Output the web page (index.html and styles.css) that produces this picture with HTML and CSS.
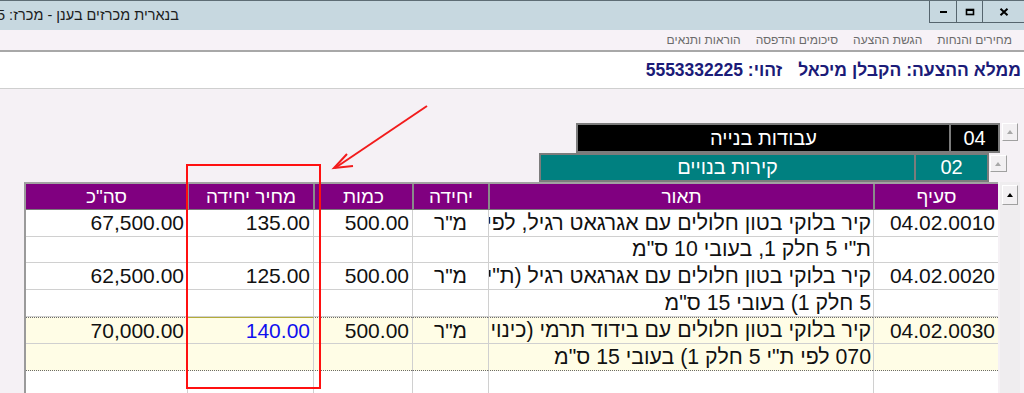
FILE: index.html
```html
<!DOCTYPE html>
<html lang="he">
<head>
  <meta charset="UTF-8" />
  <meta name="viewport" content="width=device-width, initial-scale=1" />
  <title>בנארית מכרזים בענן - מכרז: 5</title>
  <link rel="stylesheet" href="styles.css">
</head>
<body>
  <div class="window">
    <div class="titlebar">
      <span class="title" dir="rtl">בנארית מכרזים בענן - מכרז: 5</span>
      <div class="controls">
        <span class="ctl ctl-min">
          <svg width="9" height="4" viewBox="0 0 9 4"><rect x="1" y="1" width="7" height="2" fill="#000"/></svg>
        </span>
        <span class="ctl ctl-max">
          <svg width="10" height="8" viewBox="0 0 10 8"><rect x="1.5" y="1.5" width="7" height="5" fill="none" stroke="#000" stroke-width="1.6"/><rect x="1" y="1" width="8" height="2" fill="#000"/></svg>
        </span>
        <span class="ctl ctl-close">
          <svg width="10" height="8" viewBox="0 0 10 8"><path d="M1.5 0.8 L8.5 7.2 M8.5 0.8 L1.5 7.2" stroke="#000" stroke-width="2"/></svg>
        </span>
      </div>
    </div>

    <div class="menubar" dir="rtl">
      <a href="#">מחירים והנחות</a>
      <a href="#">הגשת ההצעה</a>
      <a href="#">סיכומים והדפסה</a>
      <a href="#">הוראות ותנאים</a>
    </div>

    <div class="infobar" dir="rtl">
      <span>ממלא ההצעה: הקבלן מיכאל</span>
      <span>זהוי: 5553332225</span>
    </div>

    <div class="workspace">
      <div class="level level-chapter">
        <div class="bar bar-black" dir="rtl">
          <span class="code">04</span>
          <span class="name">עבודות בנייה</span>
        </div>
        <span class="spin"></span>
      </div>

      <div class="level level-sub">
        <div class="bar bar-teal" dir="rtl">
          <span class="code">02</span>
          <span class="name">קירות בנויים</span>
        </div>
        <span class="spin"></span>
      </div>

      <div class="level level-grid">
        <table class="items" dir="rtl">
          <thead>
            <tr>
              <th class="c-seif">סעיף</th>
              <th class="c-desc">תאור</th>
              <th class="c-unit">יחידה</th>
              <th class="c-qty">כמות</th>
              <th class="c-price">מחיר יחידה</th>
              <th class="c-total">סה"כ</th>
            </tr>
          </thead>
          <tbody>
            <tr class="r-tall">
              <td class="num">04.02.0010</td>
              <td class="desc">קיר בלוקי בטון חלולים עם אגרגאט רגיל, לפי</td>
              <td class="unit">מ"ר</td>
              <td class="num">500.00</td>
              <td class="num">135.00</td>
              <td class="num">67,500.00</td>
            </tr>
            <tr class="r-short">
              <td></td>
              <td class="desc">ת"י 5 חלק 1, בעובי 10 ס"מ</td>
              <td></td><td></td><td></td><td></td>
            </tr>
            <tr class="r-tall">
              <td class="num">04.02.0020</td>
              <td class="desc">קיר בלוקי בטון חלולים עם אגרגאט רגיל (ת"י</td>
              <td class="unit">מ"ר</td>
              <td class="num">500.00</td>
              <td class="num">125.00</td>
              <td class="num">62,500.00</td>
            </tr>
            <tr class="r-tall">
              <td></td>
              <td class="desc">5 חלק 1) בעובי 15 ס"מ</td>
              <td></td><td></td><td></td><td></td>
            </tr>
            <tr class="r-short sel sel-first">
              <td class="num">04.02.0030</td>
              <td class="desc">קיר בלוקי בטון חלולים עם בידוד תרמי (כינוי</td>
              <td class="unit">מ"ר</td>
              <td class="num">500.00</td>
              <td class="num edit">140.00</td>
              <td class="num">70,000.00</td>
            </tr>
            <tr class="r-tall sel sel-last">
              <td></td>
              <td class="desc">070 לפי ת"י 5 חלק 1) בעובי 15 ס"מ</td>
              <td></td><td></td><td></td><td></td>
            </tr>
            <tr class="r-tall">
              <td></td><td></td><td></td><td></td><td></td><td></td>
            </tr>
          </tbody>
        </table>
        <div class="vscroll">
          <span class="spin spin-on"></span>
        </div>
      </div>
    </div>

    <div class="mark-box"></div>
    <svg class="mark-arrow" width="110" height="80" viewBox="0 0 110 80">
      <path d="M105 8 L13 70" stroke="#f21c1c" stroke-width="2" fill="none"/>
      <path d="M25 56 L12 70 L31 68" stroke="#f21c1c" stroke-width="2" fill="none"/>
    </svg>
  </div>
</body>
</html>
```

FILE: styles.css
```css
* {
  box-sizing: border-box;
}

body {
  margin: 0;
  font-family: "Liberation Sans", Arial, sans-serif;
  background-color: #f5f1f5;
  overflow: hidden;
}

.window {
  position: relative;
  width: 1024px;
  height: 393px;
  display: flex;
  flex-direction: column;
  overflow: hidden;
}

/* title bar */
.titlebar {
  height: 30px;
  flex: none;
  background-color: #c7d8e0;
  border-top: 1px solid #5e6d75;
  display: flex;
  justify-content: space-between;
  align-items: flex-start;
}

.title {
  margin-left: -3px;
  line-height: 29px;
  font-size: 14.5px;
  color: #1c1c1c;
}

.controls {
  display: flex;
}

.ctl {
  height: 22px;
  display: flex;
  align-items: center;
  justify-content: center;
  border-left: 1px solid #56656e;
  border-bottom: 1px solid #56656e;
}

.ctl-min {
  width: 27px;
}

.ctl-max {
  width: 26px;
}

.ctl-close {
  width: 42px;
}

/* menu */
.menubar {
  height: 22px;
  flex: none;
  display: flex;
  align-items: center;
  gap: 15px;
  padding-right: 12px;
  background-color: #f7f2f7;
  border-bottom: 2px solid #a8a8a8;
}

.menubar a {
  font-size: 12px;
  color: #6b6b6b;
  text-decoration: none;
}

/* who fills the offer */
.infobar {
  height: 37px;
  flex: none;
  display: flex;
  align-items: center;
  gap: 16px;
  padding-right: 3px;
  background-color: #fff;
  border-bottom: 1px solid #cfcfcf;
  font-size: 17.5px;
  font-weight: bold;
  color: #1b1b78;
}

/* work area */
.workspace {
  flex: 1;
  display: flex;
  flex-direction: column;
  padding-top: 34px;
}

.level {
  display: flex;
  justify-content: flex-end;
  align-items: flex-start;
}

.level-chapter {
  gap: 2px;
  padding-right: 6px;
}

.level-sub {
  gap: 1px;
  padding-right: 17px;
}

.level-grid {
  flex: 1;
  align-items: stretch;
  padding-right: 4px;
}

.bar {
  display: flex;
  gap: 2px;
  border: 2px solid #7c7c7c;
  background-color: #7c7c7c;
  color: #fff;
  font-size: 20px;
}

.bar span {
  display: flex;
  align-items: center;
  justify-content: center;
}

.bar-black {
  width: 424px;
  height: 30px;
}

.bar-black span {
  background-color: #000;
}

.bar-black .code {
  width: 47px;
}

.bar-teal {
  width: 450px;
  height: 29px;
}

.bar-teal span {
  background-color: #008080;
}

.bar-teal .code {
  width: 71px;
}

.bar .name {
  flex: 1;
}

.spin {
  position: relative;
  width: 16px;
  height: 18px;
  background-color: #f2f0f2;
  border: 1px solid;
  border-color: #fff #a0a0a0 #a0a0a0 #fff;
}

.level-sub .spin {
  width: 17px;
  height: 17px;
  margin-top: 2px;
}

.spin::after {
  content: "";
  position: absolute;
  left: 4px;
  top: 6px;
  border-left: 3px solid transparent;
  border-right: 3px solid transparent;
  border-bottom: 4px solid #a8a8a8;
}

.spin-on {
  display: block;
  height: 20px;
  margin: 3px 2px 0 2px;
}

.spin-on::after {
  top: 7px;
  border-bottom-color: #000;
}

/* items grid */
.items {
  width: 974px;
  align-self: flex-start;
  table-layout: fixed;
  border-collapse: separate;
  border-spacing: 0;
  border-top: 2px solid #a2a2a2;
  border-left: 2px solid #9a9a9a;
  background-color: #fff;
  font-size: 21px;
  color: #111;
}

.items th,
.items td {
  padding: 0;
  overflow: hidden;
  white-space: nowrap;
}

.items th {
  height: 26px;
  background-color: #800080;
  color: #fff;
  font-size: 19px;
  font-weight: normal;
  border-left: 2px solid #8a8a8a;
  border-bottom: 1px solid #7a7a7a;
}

.items th:last-child,
.items td:last-child {
  border-left: 0;
}

.c-seif { width: 125px; }
.c-desc { width: 385px; }
.c-unit { width: 76px; }
.c-qty { width: 99px; }
.c-price { width: 126px; }
.c-total { width: 161px; }

.items td {
  border-left: 1px solid #d0d0d0;
  border-bottom: 1px solid #d0d0d0;
}

.r-tall { height: 27px; }
.r-short { height: 26px; }

.items .num {
  text-align: right;
  padding-right: 3px;
}

.items .desc {
  text-align: right;
  padding-right: 2px;
  font-size: 21.3px;
}

.items .unit {
  text-align: center;
}

.sel td {
  background-color: #fffde6;
}

.sel-first td {
  border-top: 1px dotted #6a6a6a;
}

.sel-last td {
  border-bottom: 1px dotted #6a6a6a;
}

.items .edit {
  color: #1010ee;
  border-top: 1px solid #b3ab3a;
}

.vscroll {
  width: 20px;
  flex: none;
  margin-left: 2px;
  background-color: #efedef;
}

/* annotation */
.mark-box {
  position: absolute;
  left: 186px;
  top: 164px;
  width: 135px;
  height: 225px;
  border: 2px solid #ff1010;
}

.mark-arrow {
  position: absolute;
  left: 322px;
  top: 98px;
}
```
